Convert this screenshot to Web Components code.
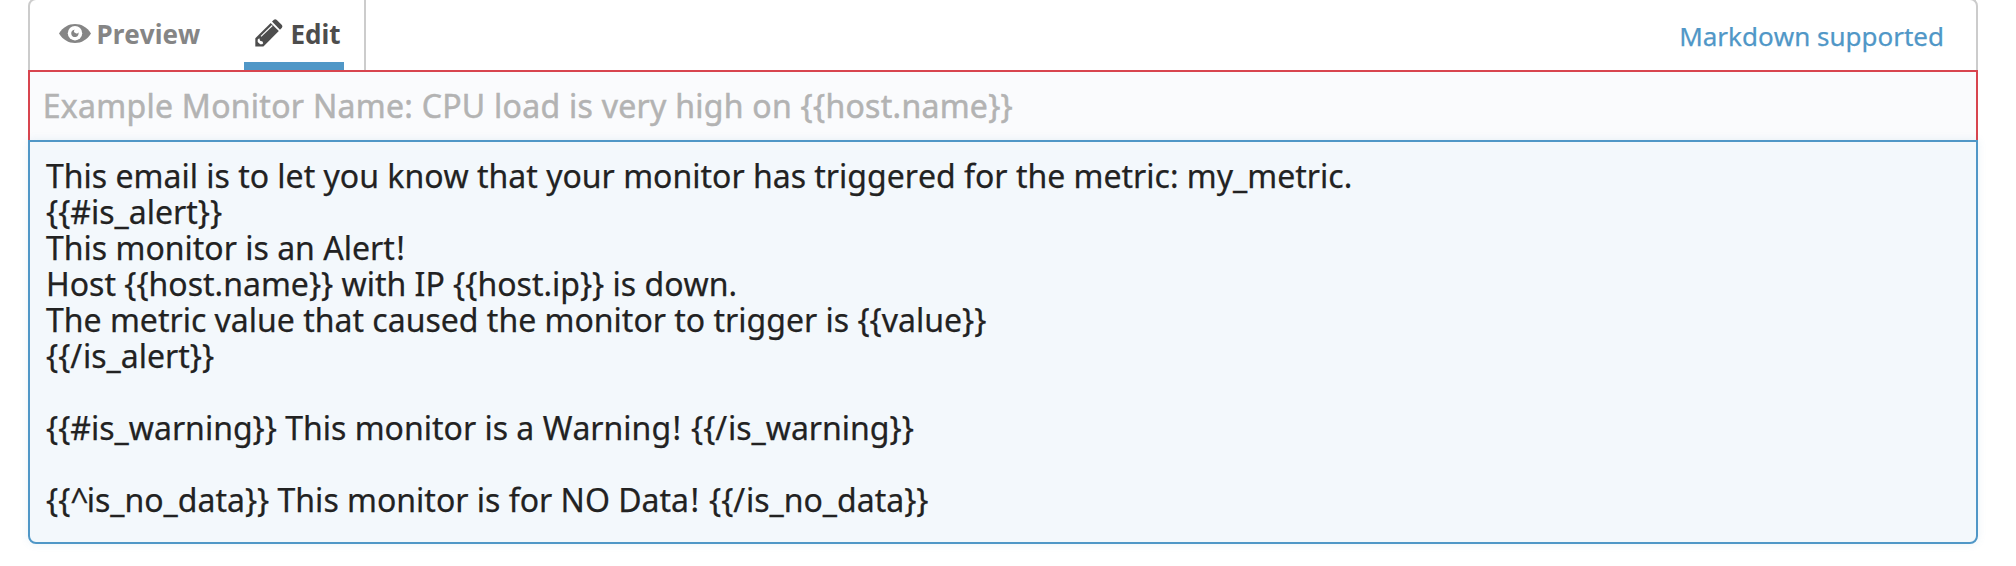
<!DOCTYPE html>
<html lang="en">
<head>
<meta charset="utf-8">
<title>Monitor message</title>
<style>
html,body{margin:0;background:#fff}
body{height:566px;overflow:hidden;font-family:"Noto Sans",sans-serif;font-kerning:none;color:#222}
.caret{letter-spacing:-2px}
.bang{letter-spacing:1.500px}
.slash{letter-spacing:.7px}
</style>
</head>
<body>
<message-editor>
  <editor-tabs slot="head">
    <editor-tab icon="eye">Preview</editor-tab>
    <editor-tab icon="pencil" active>Edit</editor-tab>
    <help-link slot="end">Markdown supported</help-link>
  </editor-tabs>
  <title-field>Example Monitor Name: CPU load is very high on {{host.name}}</title-field>
  <message-body>
    <message-line>This email is to let you know that your monitor has triggered for the metric: my_metric.</message-line>
    <message-line>{{#is_alert}}</message-line>
    <message-line>This monitor is an Aler<span class="bang">t!</span></message-line>
    <message-line>Host {{host.name}} with IP {{host.ip}} is down.</message-line>
    <message-line>The metric value that caused the monitor to trigger is {{value}}</message-line>
    <message-line>{{<span class="slash">/</span>is_alert}}</message-line>
    <message-line></message-line>
    <message-line>{{#is_warning}} This monitor is a Warnin<span class="bang">g!</span> {{<span class="slash">/</span>is_warning}}</message-line>
    <message-line></message-line>
    <message-line>{{<span class="caret">^</span>is_no_data}} This monitor is for NO Dat<span class="bang">a!</span> {{<span class="slash">/</span>is_no_data}}</message-line>
  </message-body>
</message-editor>
<script>
const icons = {
  eye: `<svg width="32" height="19" viewBox="0 0 32 19"><path fill="currentColor" d="M0 9.500C4 3.200 9.500 0 16 0s12 3.200 16 9.500C28 15.800 22.500 19 16 19S4 15.800 0 9.500Z"/><circle cx="16" cy="9.200" r="7.200" fill="#fff"/><path fill="currentColor" d="M16 5.700a1.700 1.700 0 0 0 .5 3.300 1.700 1.700 0 0 0 2.900-.8A3.700 3.700 0 1 1 16 5.700Z"/></svg>`,
  pencil: `<svg width="28" height="28" viewBox="0 0 28 28"><path fill="currentColor" d="M0.300 19.300 15.700 3.900 23.800 12 8.400 27.400H0.300Z"/><path fill="currentColor" d="M17 2.600 18.900.7Q20.200-.4 21.500.7L26.900 6.100Q28 7.400 26.900 8.700L25 10.700Z"/><path fill="#fff" d="M2.700 20.600 4.300 19.300 5.100 21.700 7.500 22.500 8.200 24.200 7.200 25.300H5.200L2.700 23Z"/><path d="M6 17.400 17.300 6.500" stroke="#fff" stroke-width="1.100"/></svg>`
};
function define(name, css, html) {
  customElements.define(name, class extends HTMLElement {
    constructor() {
      super();
      const t = document.createElement('template');
      t.innerHTML = `<style>${css}</style>` + html;
      this.attachShadow({mode: 'open'}).append(t.content.cloneNode(true));
      const holder = this.shadowRoot.querySelector('.icon');
      if (holder) holder.innerHTML = icons[this.getAttribute('icon')];
    }
  });
}
define('message-editor',
  `:host{display:block;width:1950px;margin-left:28px}`,
  `<slot name="head"></slot><slot></slot>`);
define('editor-tabs',
  `:host{display:flex;box-sizing:border-box;height:72px;margin-top:-2px;border:2px solid #ccc;border-bottom:0;border-radius:8px 8px 0 0;justify-content:space-between}
   nav{display:flex;gap:30px;box-sizing:border-box;width:336px;padding:0 20px 0 28px;border-right:2px solid #ccc}`,
  `<nav><slot></slot></nav><slot name="end"></slot>`);
define('editor-tab',
  `:host{display:flex;box-sizing:border-box;height:70px;font:bold 26px/36px "Noto Sans",sans-serif;font-kerning:none;color:#858585;padding:16px 0 0 1px;white-space:nowrap}
   :host([active]){color:#4d4d4d;border-bottom:8px solid #5097c7;width:100px;margin-left:auto;padding-left:11px}
   .icon{display:block;height:28px;margin:8px 5.500px 0 0;line-height:0}
   :host([active]) .icon{margin:3px 7.500px 0 0}
   svg{display:block;overflow:visible}`,
  `<span class="icon"></span><slot></slot>`);
define('help-link',
  `:host{display:block;font-size:26px;line-height:36px;color:#5097c7;-webkit-text-stroke:.25px #5097c7;padding:18px 32px 0 0}`,
  `<slot></slot>`);
define('title-field',
  `:host{display:block;box-sizing:border-box;height:70px;border:2px solid #d8454f;border-bottom:0;background:#fafbfd;color:#b3b3b3;font-size:32px;letter-spacing:.27px;-webkit-text-stroke:.5px #b3b3b3;line-height:44px;padding:12px 12px 0 12.800px;white-space:nowrap}`,
  `<slot></slot>`);
define('message-body',
  `:host{display:block;box-sizing:border-box;height:404px;border:2px solid #5097c7;border-radius:0 0 8px 8px;background:#f3f8fc;box-shadow:0 0 8px rgba(80,151,199,.12);padding:16px}`,
  `<slot></slot>`);
define('message-line',
  `:host{display:block;height:36px;font-size:32px;line-height:36px;color:#222;-webkit-text-stroke:.25px #222;white-space:pre}`,
  `<slot></slot>`);
</script>
</body>
</html>
